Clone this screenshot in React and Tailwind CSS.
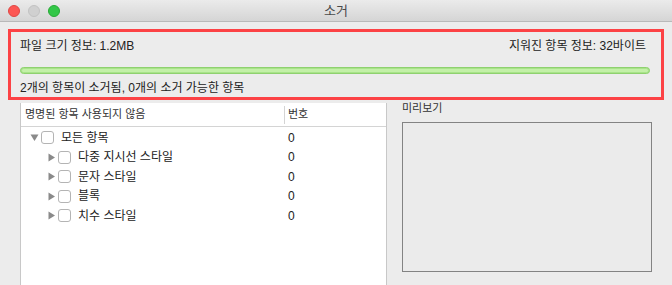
import { useState } from 'react';

const FONT = { fontFamily: '"Liberation Sans", "Noto Sans CJK KR", sans-serif' };

const children = [
  { name: '다중 지시선 스타일', count: 0 },
  { name: '문자 스타일', count: 0 },
  { name: '블록', count: 0 },
  { name: '치수 스타일', count: 0 },
];

function Checkbox() {
  return <span className="inline-block w-[13px] h-[13px] rounded-[3px] border border-[#b4b4b4] bg-white shrink-0" />;
}

function Caret({ open }) {
  return (
    <svg width="9" height="9" viewBox="0 0 9 9" className="shrink-0">
      {open ? <path d="M0.5 1.5 L8.5 1.5 L4.5 8 Z" fill="#8a8a8a" /> : <path d="M1.5 0.5 L8 4.5 L1.5 8.5 Z" fill="#8a8a8a" />}
    </svg>
  );
}

export default function App() {
  const [open] = useState(true);

  return (
    <div className="w-[672px] h-[285px] bg-[#ececec] flex flex-col overflow-hidden text-[#222]" style={FONT}>
      {/* Title bar */}
      <div className="h-[22px] shrink-0 relative flex items-center justify-center bg-gradient-to-b from-[#ebebeb] to-[#d5d5d5] border-b border-[#b9b9b9]">
        <div className="absolute left-[8px] top-[5px] flex gap-[8px]">
          <span className="w-[12px] h-[12px] rounded-full bg-[#fc5753] border border-[#df4744]" />
          <span className="w-[12px] h-[12px] rounded-full bg-[#d0d0d0] border border-[#c2c2c2]" />
          <span className="w-[12px] h-[12px] rounded-full bg-[#33c748] border border-[#27aa35]" />
        </div>
        <span className="text-[13px] text-[#4a4a4a] leading-none">소거</span>
      </div>

      {/* Summary */}
      <div className="mx-[8px] mt-[7px] h-[71px] shrink-0 border-[3px] border-[#fc4245] pl-[9px] pr-[11px] flex flex-col">
        <div className="flex justify-between items-center h-[14px] mt-[7px] text-[12px] leading-none">
          <span>파일 크기 정보: 1.2MB</span>
          <span className="mr-[4px]">지워진 항목 정보: 32바이트</span>
        </div>
        <div className="mt-[14px] h-[7px] rounded-full border border-[#8fd16f] bg-[#a8e38a] p-px">
          <div className="h-full rounded-full bg-[#c3f0a8]" />
        </div>
        <div className="mt-[8px] text-[12px] leading-none">2개의 항목이 소거됨, 0개의 소거 가능한 항목</div>
      </div>

      {/* Bottom area */}
      <div className="flex flex-1 mt-[3px] min-h-0">
        <div className="ml-[20px] w-[367px] bg-white border-l border-r border-[#c8c8c8] flex flex-col">
          <div className="h-[24px] flex items-center border-b border-[#d4d4d4] text-[11px] text-[#333]">
            <div className="w-[263px] pl-[4px]">명명된 항목 사용되지 않음</div>
            <div className="h-[18px] border-l border-[#d4d4d4] pl-[3px] flex items-center">번호</div>
          </div>
          <div className="pt-[1px] text-[12px]">
            <div className="h-[19.5px] flex items-center">
              <div className="w-[263px] flex items-center pl-[9px] gap-[2px]">
                <Caret open={open} />
                <Checkbox />
                <span className="ml-[5px]">모든 항목</span>
              </div>
              <span className="pl-[4px]">0</span>
            </div>
            {children.map((c) => (
              <div key={c.name} className="h-[19.5px] flex items-center">
                <div className="w-[263px] flex items-center pl-[26px] gap-[2px]">
                  <Caret />
                  <Checkbox />
                  <span className="ml-[5px]">{c.name}</span>
                </div>
                <span className="pl-[4px]">{c.count}</span>
              </div>
            ))}
          </div>
        </div>

        <div className="flex-1 pl-[15px] pr-[20px] flex flex-col">
          <div className="text-[11px] text-[#333] leading-none">미리보기</div>
          <div className="mt-[8px] h-[150px] border border-[#838383] bg-[#ebebeb]" />
        </div>
      </div>
    </div>
  );
}
